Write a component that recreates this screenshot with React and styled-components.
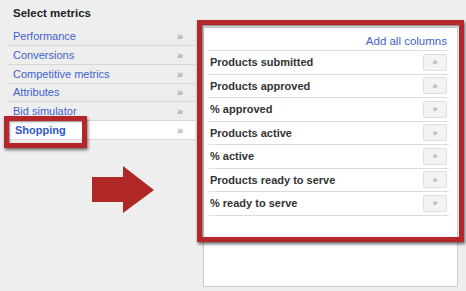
import styled, { createGlobalStyle } from 'styled-components'

const GlobalStyle = createGlobalStyle`
	body {
		margin: 0;
		background: #eeeeee;
		font-family: "Liberation Sans", Arial, sans-serif;
	}
`

const StyledPage = styled.div`
	display: grid;
	grid-template-columns: 187px 255px;
	column-gap: 8px;
	padding-left: 8px;
	width: 466px;
	height: 291px;
	box-sizing: border-box;
	overflow: hidden;
`

const StyledTitle = styled.div`
	font-size: 11.5px;
	font-weight: 700;
	color: #222222;
	height: 28.5px;
	line-height: 28px;
	padding-left: 5px;
	margin-top: -1px;
`

const StyledList = styled.div`
	display: flex;
	flex-direction: column;
`

const StyledListRow = styled.div`
	position: relative;
	display: flex;
	align-items: center;
	justify-content: space-between;
	height: 18.7px;
	box-sizing: border-box;
	border-bottom: 1px solid #d6d6d6;
	padding: 0 12px 0 5px;
	background: ${(p) => (p.$active ? '#ffffff' : 'transparent')};
`

const StyledListLink = styled.span`
	font-size: 11px;
	font-weight: ${(p) => (p.$active ? 700 : 400)};
	color: ${(p) => (p.$active ? '#2f58c8' : '#3f62cf')};
	padding-left: ${(p) => (p.$active ? '2px' : '0')};
`

const StyledChevron = styled.span`
	font-size: 11px;
	color: #8a8a8a;
`

const StyledHighlight = styled.div`
	position: absolute;
	left: -4px;
	top: -5px;
	width: 83px;
	height: 32px;
	box-sizing: border-box;
	border: 5px solid #b3272a;
	box-shadow: 1px 2px 3px rgba(0, 0, 0, 0.55), inset 1px 1px 2px rgba(0, 0, 0, 0.45);
`

const StyledArrow = styled.svg`
	display: block;
	width: 62px;
	height: 48px;
	margin: 26px 0 0 84px;
	fill: #b02826;
`

const StyledPanel = styled.div`
	position: relative;
	margin-top: 27px;
	height: 260px;
	box-sizing: border-box;
	background: #ffffff;
	border: 1px solid #cccccc;
	padding: 0 8px 0 5px;
`

const StyledPanelHead = styled.div`
	display: flex;
	justify-content: flex-end;
	align-items: center;
	height: 23px;
	padding: 3px 2px 0 0;
	box-sizing: border-box;
	border-bottom: 1px solid #dddddd;
`

const StyledAddAll = styled.span`
	font-size: 11.5px;
	color: #3f62cf;
`

const StyledMetricRow = styled.div`
	display: flex;
	align-items: center;
	justify-content: space-between;
	height: 23.5px;
	box-sizing: border-box;
	border-bottom: 1px solid #dddddd;
	padding: 0 2px 0 1px;
`

const StyledMetricName = styled.span`
	font-size: 11px;
	font-weight: 700;
	color: #333333;
`

const StyledAddButton = styled.span`
	display: flex;
	align-items: center;
	justify-content: center;
	width: 24px;
	height: 17px;
	box-sizing: border-box;
	background: #f3f3f3;
	border: 1px solid #dedede;
	border-radius: 2px;
	font-size: 9px;
	color: #888888;
`

const StyledFrame = styled.div`
	position: absolute;
	left: -7px;
	top: -8px;
	right: -7px;
	height: 222px;
	box-sizing: border-box;
	border: 5px solid #b3272a;
	box-shadow: 1px 2px 3px rgba(0, 0, 0, 0.6), inset 1px 1px 2px rgba(0, 0, 0, 0.5);
	pointer-events: none;
`

const groups = ['Performance', 'Conversions', 'Competitive metrics', 'Attributes', 'Bid simulator', 'Shopping']

const metrics = [
	'Products submitted',
	'Products approved',
	'% approved',
	'Products active',
	'% active',
	'Products ready to serve',
	'% ready to serve',
]

const App = () => {
	return (
		<>
			<GlobalStyle />
			<StyledPage>
				<div>
					<StyledTitle>Select metrics</StyledTitle>
					<StyledList>
						{groups.map((name) => {
							const active = name === 'Shopping'
							return (
								<StyledListRow key={name} $active={active}>
									<StyledListLink $active={active}>{name}</StyledListLink>
									<StyledChevron>»</StyledChevron>
									{active && <StyledHighlight />}
								</StyledListRow>
							)
						})}
					</StyledList>
					<StyledArrow viewBox="0 0 62 48">
						<polygon points="0,11 31,11 31,0 62,24 31,47 31,36 0,36" />
					</StyledArrow>
				</div>
				<StyledPanel>
					<StyledPanelHead>
						<StyledAddAll>Add all columns</StyledAddAll>
					</StyledPanelHead>
					{metrics.map((m) => (
						<StyledMetricRow key={m}>
							<StyledMetricName>{m}</StyledMetricName>
							<StyledAddButton>»</StyledAddButton>
						</StyledMetricRow>
					))}
					<StyledFrame />
				</StyledPanel>
			</StyledPage>
		</>
	)
}

export default App
